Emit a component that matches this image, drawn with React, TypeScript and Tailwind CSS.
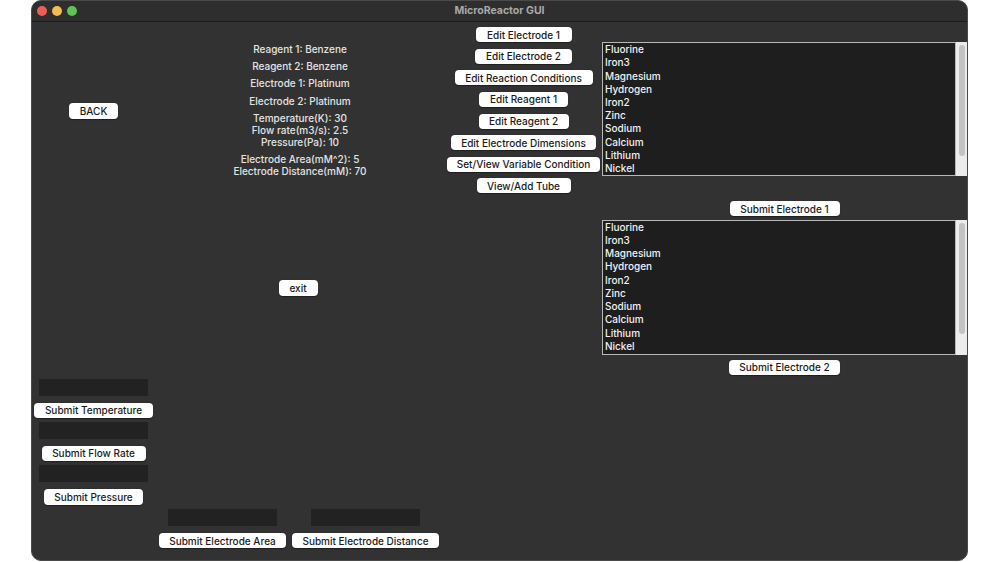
import React from "react";

const btn = "flex items-center justify-center bg-white text-[#1b1b1b] rounded-[4px] text-[10px] font-medium leading-none shadow-[0_0.5px_1px_rgba(0,0,0,0.4)]";
const entry = "bg-[#222222]";

const elements = ["Fluorine", "Iron3", "Magnesium", "Hydrogen", "Iron2", "Zinc", "Sodium", "Calcium", "Lithium", "Nickel"];

function ListBox({ height }: { height: string }) {
  return (
    <div className={`flex w-full ${height}`}>
      <div className="flex-1 border border-[#b8b8b8] bg-[#1e1e1e] pl-[2px] overflow-hidden">
        {elements.map((el) => (
          <div key={el} className="text-[10px] font-medium leading-[13.2px] text-[#f2f2f2]">{el}</div>
        ))}
      </div>
      <div className="w-[11px] bg-[#ececec] pt-[3px] flex justify-center">
        <div className="w-[6px] h-[111px] rounded-full bg-[#c3c3c3]" />
      </div>
    </div>
  );
}

function TrafficLights() {
  return (
    <div className="flex items-center gap-[5px] pl-[5px]">
      <span className="w-[10px] h-[10px] rounded-full bg-[#ec5f56]" />
      <span className="w-[10px] h-[10px] rounded-full bg-[#f4bd4f]" />
      <span className="w-[10px] h-[10px] rounded-full bg-[#5fc453]" />
    </div>
  );
}

export default function App() {
  return (
    <div className="min-h-screen bg-white font-['Inter',sans-serif]">
      <div className="ml-[31px] w-[937px] h-[561px] rounded-[10px] bg-[#323232] border border-[#4a4a4a] overflow-hidden flex flex-col">
        {/* title bar */}
        <div className="h-[21px] bg-[#2e2e2e] border-b border-[#1b1b1b] grid grid-cols-[1fr_auto_1fr] items-center">
          <TrafficLights />
          <div className="text-[10.5px] font-bold text-[#a9a9a9]">MicroReactor GUI</div>
          <div />
        </div>

        <div className="flex flex-1 pt-[0.5px]">
          {/* left column */}
          <div className="w-[123px] flex flex-col items-center">
            <button className={`${btn} w-[49px] h-[16px] mt-[80px]`}>BACK</button>
            <div className={`${entry} w-[109px] h-[17px] mt-[260px]`} />
            <button className={`${btn} w-[119px] h-[15px] mt-[7px]`}>Submit Temperature</button>
            <div className={`${entry} w-[109px] h-[17px] mt-[4px]`} />
            <button className={`${btn} w-[104px] h-[15px] mt-[7px]`}>Submit Flow Rate</button>
            <div className={`${entry} w-[109px] h-[17px] mt-[4px]`} />
            <button className={`${btn} w-[99px] h-[16px] mt-[7px]`}>Submit Pressure</button>
          </div>

          {/* info column */}
          <div className="w-[290px] flex flex-col items-center">
            <div className="mt-[17.6px] flex flex-col items-center text-center text-[10px] font-medium leading-[12.1px] text-[#e4e4e4]">
              <div className="py-[2.6px]">Reagent 1: Benzene</div>
              <div className="py-[2.6px]">Reagent 2: Benzene</div>
              <div className="py-[2.6px]">Electrode 1: Platinum</div>
              <div className="py-[2.6px]">Electrode 2: Platinum</div>
              <div className="py-[2.6px]">
                Temperature(K): 30<br />Flow rate(m3/s): 2.5<br />Pressure(Pa): 10
              </div>
              <div className="py-[2.6px]">
                Electrode Area(mM^2): 5<br />Electrode Distance(mM): 70
              </div>
            </div>
            <button className={`${btn} w-[39px] h-[16px] mt-[100px] -translate-x-[2px]`}>exit</button>
            <div className="mt-[213px] flex gap-[6px] self-start pl-[4px]">
              <div className="flex flex-col items-center gap-[7px]">
                <div className={`${entry} w-[109px] h-[17px]`} />
                <button className={`${btn} w-[127px] h-[15px]`}>Submit Electrode Area</button>
              </div>
              <div className="flex flex-col items-center gap-[7px]">
                <div className={`${entry} w-[109px] h-[17px]`} />
                <button className={`${btn} w-[147px] h-[15px]`}>Submit Electrode Distance</button>
              </div>
            </div>
          </div>

          {/* edit buttons */}
          <div className="w-[157px] flex flex-col items-center gap-[6.6px] pt-[4.7px]">
            <button className={`${btn} w-[96px] h-[15px]`}>Edit Electrode 1</button>
            <button className={`${btn} w-[97px] h-[15px]`}>Edit Electrode 2</button>
            <button className={`${btn} w-[138px] h-[15px]`}>Edit Reaction Conditions</button>
            <button className={`${btn} w-[89px] h-[15px]`}>Edit Reagent 1</button>
            <button className={`${btn} w-[90px] h-[15px]`}>Edit Reagent 2</button>
            <button className={`${btn} w-[145px] h-[15px]`}>Edit Electrode Dimensions</button>
            <button className={`${btn} w-[153px] h-[15px]`}>Set/View Variable Condition</button>
            <button className={`${btn} w-[94px] h-[15px]`}>View/Add Tube</button>
          </div>

          {/* electrode lists */}
          <div className="w-[365px] flex flex-col items-center pt-[19.7px]">
            <ListBox height="h-[134px]" />
            <button className={`${btn} w-[110px] h-[15px] mt-[25px]`}>Submit Electrode 1</button>
            <div className="w-full mt-[3.7px]">
              <ListBox height="h-[135px]" />
            </div>
            <button className={`${btn} w-[111px] h-[15px] mt-[5px]`}>Submit Electrode 2</button>
          </div>
        </div>
      </div>
    </div>
  );
}
